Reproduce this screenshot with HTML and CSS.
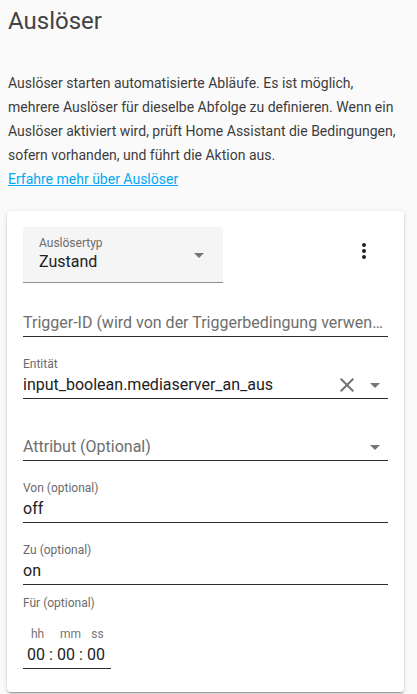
FILE: index.html
```html
<!DOCTYPE html>
<html lang="de">
<head>
<meta charset="utf-8">
<title>Auslöser</title>
<link rel="stylesheet" href="styles.css">
</head>
<body>
<div class="page">
  <h1 class="title">Auslöser</h1>
  <p class="intro">Auslöser starten automatisierte Abläufe. Es ist möglich, mehrere Auslöser für dieselbe Abfolge zu definieren. Wenn ein Auslöser aktiviert wird, prüft Home Assistant die Bedingungen, sofern vorhanden, und führt die Aktion aus.</p>
  <a class="learn" href="#">Erfahre mehr über Auslöser</a>

  <div class="card">
    <div class="card-head">
      <div class="select">
        <div class="select-text">
          <span class="label">Auslösertyp</span>
          <span class="value">Zustand</span>
        </div>
        <svg class="arrow" viewBox="0 0 24 24" width="24" height="24"><path d="M7,10L12,15L17,10H7Z"/></svg>
      </div>
      <button class="menu-btn" type="button" aria-label="Menü">
        <svg viewBox="0 0 24 24" width="24" height="24"><path d="M12,16A2,2 0 0,1 14,18A2,2 0 0,1 12,20A2,2 0 0,1 10,18A2,2 0 0,1 12,16M12,10A2,2 0 0,1 14,12A2,2 0 0,1 12,14A2,2 0 0,1 10,12A2,2 0 0,1 12,10M12,4A2,2 0 0,1 14,6A2,2 0 0,1 12,8A2,2 0 0,1 10,6A2,2 0 0,1 12,4Z"/></svg>
      </button>
    </div>

    <div class="field field-short">
      <span class="placeholder">Trigger-ID (wird von der Triggerbedingung verwen…</span>
    </div>

    <div class="field">
      <span class="label">Entität</span>
      <div class="row">
        <span class="value grow">input_boolean.mediaserver_an_aus</span>
        <svg class="clear" viewBox="0 0 24 24" width="24" height="24"><path d="M19,6.41L17.59,5L12,10.59L6.41,5L5,6.41L10.59,12L5,17.59L6.41,19L12,13.41L17.59,19L19,17.59L13.41,12L19,6.41Z"/></svg>
        <svg class="arrow" viewBox="0 0 24 24" width="24" height="24"><path d="M7,10L12,15L17,10H7Z"/></svg>
      </div>
    </div>

    <div class="field">
      <div class="row">
        <span class="placeholder grow">Attribut (Optional)</span>
        <svg class="arrow" viewBox="0 0 24 24" width="24" height="24"><path d="M7,10L12,15L17,10H7Z"/></svg>
      </div>
    </div>

    <div class="field">
      <span class="label">Von (optional)</span>
      <span class="value">off</span>
    </div>

    <div class="field">
      <span class="label">Zu (optional)</span>
      <span class="value">on</span>
    </div>

    <div class="for">
      <span class="label">Für (optional)</span>
      <div class="duration">
        <span class="dur-label">hh</span><span></span><span class="dur-label">mm</span><span></span><span class="dur-label">ss</span>
        <span class="dur-val">00</span><span class="dur-sep">:</span><span class="dur-val">00</span><span class="dur-sep">:</span><span class="dur-val">00</span>
      </div>
    </div>
  </div>
</div>
</body>
</html>
```
FILE: styles.css
```css
html, body {
  margin: 0;
  padding: 0;
  background: #fafafa;
}

body {
  font-family: Roboto, "Noto Sans", "Liberation Sans", sans-serif;
  color: #212121;
}

.page {
  width: 397px;
  padding: 0 13px 16px 7px;
}

.title {
  margin: 5px 0 0 1px;
  font-size: 24px;
  line-height: 32px;
  font-weight: 400;
  color: #424242;
}

.intro {
  margin: 34px 0 0 1px;
  font-size: 14px;
  line-height: 24px;
  color: #3d3d3d;
}

.learn {
  display: block;
  margin: 0 0 0 1px;
  font-size: 14px;
  line-height: 24px;
  color: #03a9f4;
  text-decoration: underline;
}

.card {
  margin-top: 20px;
  background: #fff;
  border-radius: 4px;
  box-shadow: 0 2px 2px 0 rgba(0,0,0,.14), 0 1px 5px 0 rgba(0,0,0,.12), 0 3px 1px -2px rgba(0,0,0,.2);
  padding: 16px 16px 23px;
}

.card-head {
  display: flex;
  justify-content: space-between;
  align-items: flex-start;
}

.select {
  box-sizing: border-box;
  width: 200px;
  height: 56px;
  background: #f5f5f5;
  border-radius: 4px 4px 0 0;
  border-bottom: 1px solid #8f8f8f;
  display: flex;
  align-items: center;
  padding: 0 12px 0 16px;
}

.select-text {
  flex: 1;
  display: flex;
  flex-direction: column;
  padding-bottom: 3px;
}

.select .label {
  margin-bottom: 0;
}

.arrow {
  fill: #757575;
  flex: none;
}

.menu-btn {
  width: 48px;
  height: 48px;
  border: 0;
  padding: 0;
  background: transparent;
  display: flex;
  align-items: center;
  justify-content: center;
}

.menu-btn svg {
  fill: #212121;
}

.label {
  display: block;
  font-size: 12px;
  line-height: 17px;
  color: #6b6b6b;
  margin-bottom: 2px;
}

.value {
  display: block;
  font-size: 16px;
  line-height: 20px;
  color: #212121;
}

.placeholder {
  display: block;
  font-size: 16px;
  line-height: 20px;
  color: #6e6e6e;
  white-space: nowrap;
}

.field {
  box-sizing: border-box;
  height: 62px;
  border-bottom: 1px solid #2b2b2b;
  display: flex;
  flex-direction: column;
  justify-content: flex-end;
  padding-bottom: 3px;
}

.field-short {
  height: 54px;
}

.row {
  display: flex;
  align-items: center;
  height: 20px;
}

.grow {
  flex: 1;
  min-width: 0;
}

.clear {
  fill: #737373;
  flex: none;
  margin-right: 4px;
}

.row .arrow {
  margin-right: 1px;
}

.for {
  padding-top: 10px;
}

.for .label {
  margin-bottom: 0;
}

.duration {
  box-sizing: border-box;
  width: 88px;
  margin-top: 14px;
  padding: 0 0 3px 4px;
  border-bottom: 1px solid #2b2b2b;
  display: grid;
  grid-template-columns: 18px 12px 18px 12px 18px;
  row-gap: 3px;
}

.dur-label {
  font-size: 12px;
  line-height: 16px;
  color: #757575;
  text-align: center;
  padding-left: 3px;
}

.dur-val {
  font-size: 16px;
  line-height: 20px;
  color: #212121;
  text-align: center;
}

.dur-sep {
  font-size: 16px;
  line-height: 20px;
  text-align: center;
  color: #212121;
}
```
